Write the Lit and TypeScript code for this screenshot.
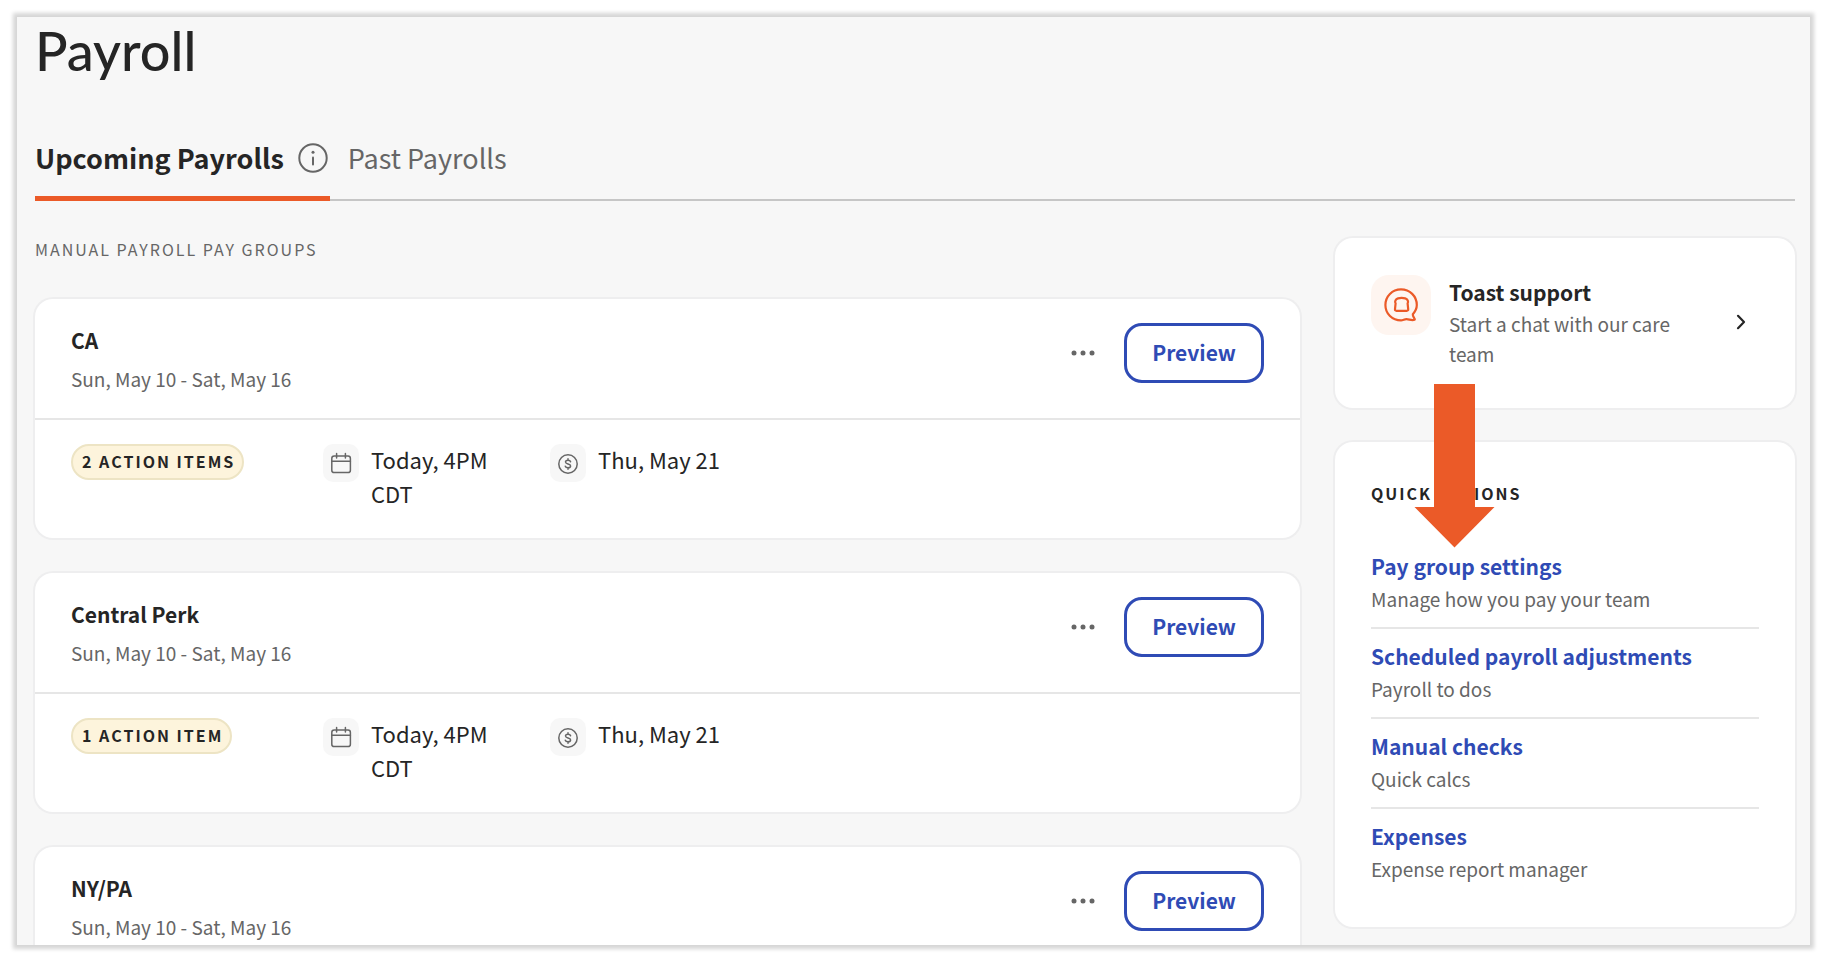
import { LitElement, html, css } from "lit";
import { customElement, property } from "lit/decorators.js";

interface PayGroup {
  name: string;
  period: string;
  actions: string;
  due: string;
  payday: string;
}

const groups: PayGroup[] = [
  { name: "CA", period: "Sun, May 10 - Sat, May 16", actions: "2 action items", due: "Today, 4PM CDT", payday: "Thu, May 21" },
  { name: "Central Perk", period: "Sun, May 10 - Sat, May 16", actions: "1 action item", due: "Today, 4PM CDT", payday: "Thu, May 21" },
  { name: "NY/PA", period: "Sun, May 10 - Sat, May 16", actions: "", due: "", payday: "" },
];

const quickActions = [
  { title: "Pay group settings", text: "Manage how you pay your team" },
  { title: "Scheduled payroll adjustments", text: "Payroll to dos" },
  { title: "Manual checks", text: "Quick calcs" },
  { title: "Expenses", text: "Expense report manager" },
];

@customElement("pay-group-card")
class PayGroupCard extends LitElement {
  @property({ attribute: false }) group!: PayGroup;

  static styles = css`
    :host {
      display: block;
      background: #fff;
      border-radius: 18px;
      box-shadow: 0 0 0 2px #eeeeef;
    }
    .head {
      display: flex;
      justify-content: space-between;
      align-items: flex-start;
      padding: 24px 36px 21px;
      border-bottom: 2px solid #e6e6e6;
    }
    .name {
      margin: 0 0 4px;
      font-size: 21px;
      line-height: 34px;
      font-weight: 700;
    }
    .period {
      margin: 0;
      font-size: 19px;
      line-height: 36px;
      color: #666;
    }
    .controls {
      display: flex;
      align-items: center;
      gap: 20px;
    }
    .more {
      display: flex;
      align-items: center;
      justify-content: center;
      width: 42px;
      height: 42px;
      padding: 0;
      border: 0;
      background: none;
      color: #666;
    }
    .preview {
      height: 60px;
      width: 140px;
      padding: 0 0 2px;
      border: 3px solid #2f4bb5;
      border-radius: 18px;
      background: #fff;
      color: #2f4bb5;
      font: inherit;
      font-size: 21px;
      line-height: 30px;
      font-weight: 700;
    }
    .body {
      display: grid;
      grid-template-columns: 252px 227px 1fr;
      align-items: start;
      padding: 22px 36px 28px;
    }
    .badge {
      justify-self: start;
      box-sizing: border-box;
      height: 36px;
      margin-top: 2px;
      padding: 0 7px 0 9px;
      border: 2px solid #ede4c4;
      border-radius: 18px;
      background: #fdf4dc;
      font-size: 16px;
      line-height: 31px;
      font-weight: 700;
      letter-spacing: 2px;
      text-transform: uppercase;
    }
    .fact {
      display: flex;
      gap: 12px;
      padding-right: 40px;
      font-size: 22px;
      line-height: 34px;
    }
    .tile {
      display: flex;
      flex: none;
      align-items: center;
      justify-content: center;
      width: 36px;
      height: 38px;
      margin-top: 2px;
      border-radius: 10px;
      background: #f7f7f7;
      color: #666;
    }
  `;

  render() {
    const g = this.group;
    return html`
      <div class="head">
        <div>
          <h2 class="name">${g.name}</h2>
          <p class="period">${g.period}</p>
        </div>
        <div class="controls">
          <button class="more" aria-label="More options">
            <svg width="24" height="6" viewBox="0 0 24 6" fill="currentColor">
              <circle cx="3" cy="3" r="2.5" /><circle cx="12" cy="3" r="2.5" /><circle cx="21" cy="3" r="2.5" />
            </svg>
          </button>
          <button class="preview">Preview</button>
        </div>
      </div>
      ${g.actions
        ? html`<div class="body">
            <span class="badge">${g.actions}</span>
            <div class="fact">
              <span class="tile">
                <svg width="22" height="22" viewBox="0 0 22 22" fill="none" stroke="currentColor" stroke-width="1.5" stroke-linecap="round">
                  <rect x="1.8" y="4" width="18.6" height="16.6" rx="2.4" />
                  <path d="M1.8 9.2H20.4M6.6 1.6V6M15.4 1.6V6" />
                </svg>
              </span>
              <span>${g.due}</span>
            </div>
            <div class="fact">
              <span class="tile">
                <svg width="22" height="22" viewBox="0 0 22 22" fill="none" stroke="currentColor" stroke-width="1.5" stroke-linecap="round">
                  <circle cx="11" cy="12" r="9.2" />
                  <path d="M13.6 9.7C13.3 8.7 12.3 8.2 11 8.2C9.5 8.2 8.5 8.9 8.5 10C8.5 12.6 13.6 11.3 13.6 14C13.6 15.1 12.5 15.8 11 15.8C9.6 15.8 8.6 15.2 8.3 14.2M11 6.7V8.2M11 15.8V17.3" />
                </svg>
              </span>
              <span>${g.payday}</span>
            </div>
          </div>`
        : ""}
    `;
  }
}

@customElement("app-root")
class AppRoot extends LitElement {
  static styles = css`
    :host {
      display: block;
      box-sizing: border-box;
      height: 100vh;
      padding: 17px 16px 15px 17px;
      background: #fff;
      color: #252525;
      font-family: "Noto Sans CJK SC", "Noto Sans", sans-serif;
    }
    .frame {
      box-sizing: border-box;
      height: 100%;
      padding: 0 15px 0 18px;
      overflow: hidden;
      background: #f7f7f7;
      box-shadow: 0 0 4px 4px #d6d6d6;
    }
    .title {
      margin: 0;
      font-family: Lato, sans-serif;
      font-size: 54px;
      line-height: 68px;
      font-weight: 500;
    }
    .tabs {
      display: flex;
      gap: 18px;
      margin-top: 38px;
      height: 76px;
      border-bottom: 2px solid #c6c6c6;
    }
    .tab {
      display: flex;
      align-items: flex-start;
      gap: 14px;
      height: 78px;
      box-sizing: border-box;
      padding: 16px 0 0;
      border: 0;
      background: none;
      font: inherit;
      font-size: 27px;
      line-height: 38px;
      color: #666;
    }
    .tab.active {
      border-bottom: 5px solid #eb5a28;
      font-weight: 700;
      color: #252525;
    }
    .info {
      flex: none;
      margin: 4px 2px 0 0;
    }
    .columns {
      display: grid;
      grid-template-columns: 1fr 460px;
      gap: 35px;
      align-items: start;
    }
    .group-label {
      margin: 0 0 35px;
      padding-top: 33px;
      font-size: 16px;
      line-height: 30px;
      font-weight: 400;
      letter-spacing: 2px;
      text-transform: uppercase;
      color: #666;
    }
    .list {
      display: grid;
      gap: 35px;
    }
    .side {
      position: relative;
      display: grid;
      gap: 34px;
      padding-top: 37px;
    }
    .panel {
      border-radius: 18px;
      background: #fff;
      box-shadow: 0 0 0 2px #eeeeef;
    }
    .support {
      display: flex;
      align-items: center;
      gap: 18px;
      padding: 37px 47px 39px 36px;
      color: inherit;
      text-decoration: none;
    }
    .support-icon {
      display: flex;
      flex: none;
      align-self: flex-start;
      align-items: center;
      justify-content: center;
      width: 60px;
      height: 60px;
      border-radius: 18px;
      background: #fef5f0;
      color: #eb5a28;
    }
    .support-text {
      flex: 1;
      padding-right: 36px;
      font-size: 19px;
      line-height: 30px;
      color: #666;
    }
    .support-title {
      display: block;
      font-size: 21px;
      line-height: 34px;
      font-weight: 700;
      color: #252525;
    }
    .quick {
      padding: 36px 36px 28px;
    }
    .quick-title {
      margin: 0 0 31px;
      font-size: 16px;
      line-height: 30px;
      font-weight: 700;
      letter-spacing: 2px;
      text-transform: uppercase;
    }
    .actions {
      margin: 0;
      padding: 0;
      list-style: none;
    }
    .action {
      height: 90px;
      box-sizing: border-box;
      padding-top: 9px;
      border-bottom: 2px solid #e6e6e6;
      font-size: 19px;
      line-height: 30px;
      color: #666;
    }
    .action:last-child {
      border-bottom: 0;
    }
    .link {
      display: block;
      font-size: 21px;
      line-height: 36px;
      font-weight: 700;
      color: #2f4bb5;
      text-decoration: none;
    }
    .pointer {
      position: absolute;
      top: 183px;
      left: 79px;
      pointer-events: none;
    }
  `;

  render() {
    return html`
      <main class="frame">
        <h1 class="title">Payroll</h1>
        <div class="tabs" role="tablist">
          <button class="tab active" role="tab" aria-selected="true">
            Upcoming Payrolls
            <svg class="info" width="30" height="30" viewBox="0 0 30 30" fill="none" stroke="#666" stroke-width="2" stroke-linecap="round">
              <circle cx="15" cy="15" r="13.7" />
              <path d="M15 14.5V21.5" />
              <circle cx="15" cy="9.2" r="1.5" fill="#666" stroke="none" />
            </svg>
          </button>
          <button class="tab" role="tab" aria-selected="false">Past Payrolls</button>
        </div>
        <div class="columns">
          <section>
            <h2 class="group-label">Manual payroll pay groups</h2>
            <div class="list">${groups.map((g) => html`<pay-group-card .group=${g}></pay-group-card>`)}</div>
          </section>
          <aside class="side">
            <a class="panel support" href="#support">
              <span class="support-icon">
                <svg width="34" height="34" viewBox="0 0 34 34" fill="none" stroke="currentColor" stroke-width="2.2" stroke-linecap="round" stroke-linejoin="round">
                  <path d="M28.8 26.2C31.4 23.4 32.8 20.4 32.8 17C32.8 8.2 25.8 1.4 17 1.4C8.2 1.4 1.4 8.3 1.4 17C1.4 25.8 8.3 32.4 17 32.4C19 32.4 20.4 31.2 22.4 31.2C25 31.2 27.6 32.8 30.6 31.8C31.6 31.4 28.4 28.8 28.8 26.2Z" />
                  <path d="M11.6 15.4L11 21.2Q10.9 22.8 12.4 22.8H22.8Q24.3 22.8 24.2 21.2L23.6 15.4C24.8 13.6 23.6 11 21.2 10.4C19 9.8 16.2 9.8 14 10.4C11.6 11 10.4 13.6 11.6 15.4Z" />
                </svg>
              </span>
              <span class="support-text">
                <strong class="support-title">Toast support</strong>
                Start a chat with our care team
              </span>
              <svg width="16" height="18" viewBox="0 0 16 18" fill="none" stroke="#252525" stroke-width="2.2" stroke-linecap="round" stroke-linejoin="round">
                <path d="M6 2.8L12 9L6 15.2" />
              </svg>
            </a>
            <section class="panel quick">
              <h2 class="quick-title">Quick actions</h2>
              <ul class="actions">
                ${quickActions.map((a) => html`<li class="action"><a class="link" href="#">${a.title}</a>${a.text}</li>`)}
              </ul>
            </section>
            <svg class="pointer" width="81" height="164" viewBox="0 0 81 164" fill="#eb5a28" aria-hidden="true">
              <path d="M20 0H61V123H80.5L40.5 163.5L0.5 123H20Z" />
            </svg>
          </aside>
        </div>
      </main>
    `;
  }
}
